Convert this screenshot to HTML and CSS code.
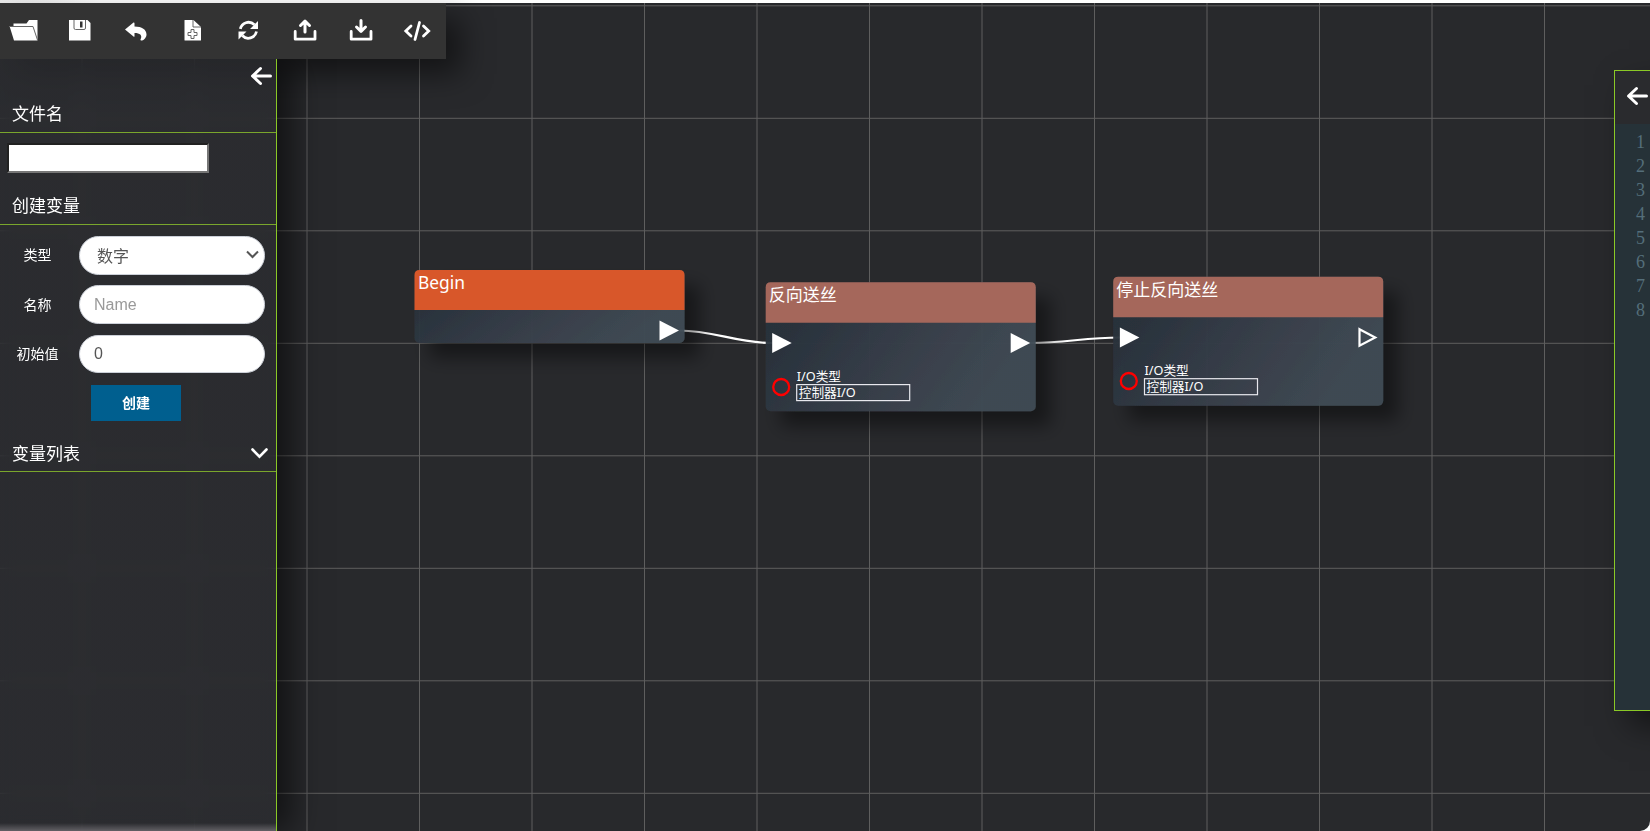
FILE: index.html
```html
<!DOCTYPE html>
<html lang="zh-CN">
<head>
<meta charset="utf-8">
<title>Flow editor</title>
<link rel="stylesheet" href="styles.css">
</head>
<body>
<main class="editor">
  <svg class="board" viewBox="0 0 1650 831">
    <defs>
      <linearGradient id="body" x1="0" y1="0" x2="1" y2=".35">
        <stop offset="0" stop-color="#28313b"/><stop offset=".2" stop-color="#2a333d"/><stop offset=".72" stop-color="#3b424e"/><stop offset="1" stop-color="#3f4b54"/>
      </linearGradient>
      <filter id="shadow" x="-20%" y="-40%" width="150%" height="210%">
        <feDropShadow dx="15" dy="15" stdDeviation="9" flood-color="#000" flood-opacity=".45"/>
      </filter>
      <path id="pin" d="M0 0 19.5 10 0 20z"/>
    </defs>
    <path class="grid" d="M82 0V831M194.500 0V831M307 0V831M419.500 0V831M532 0V831M644.500 0V831M757 0V831M869.500 0V831M982 0V831M1094.500 0V831M1207 0V831M1319.500 0V831M1432 0V831M1544.500 0V831M0 5.800H1650M0 118.300H1650M0 230.800H1650M0 343.300H1650M0 455.800H1650M0 568.300H1650M0 680.800H1650M0 793.300H1650"/>
    <path class="wire" d="M679 330.500C714 330.500 736 343 772 343M1030 343C1066 343 1084 337.500 1120 337.500"/>
    <g transform="translate(414.500 270)">
      <rect class="node-body" width="270" height="73" rx="5"/>
      <path class="node-begin" d="M0 40V5Q0 0 5 0H265Q270 0 270 5V40z"/>
      <text class="node-title node-title-begin" x="3.500" y="19">Begin</text>
      <use class="pin-on" href="#pin" x="245" y="50.500"/>
    </g>
    <g transform="translate(765.700 282.300)">
      <rect class="node-body" width="270" height="129" rx="5"/>
      <path class="node-head" d="M0 40.500V5Q0 0 5 0H265Q270 0 270 5V40.500z"/>
      <text class="node-title" x="3" y="19">反向送丝</text>
      <use class="pin-on" href="#pin" x="6.500" y="50.700"/>
      <use class="pin-on" href="#pin" x="245" y="50.700"/>
      <circle class="port" cx="15.500" cy="104.700" r="8"/>
      <text class="node-label" x="31" y="98.500">I/O类型</text>
      <rect class="node-field" x="31" y="102.300" width="113" height="16"/>
      <text class="node-label" x="33" y="114.700">控制器I/O</text>
    </g>
    <g transform="translate(1113.200 276.700)">
      <rect class="node-body" width="270" height="129" rx="5"/>
      <path class="node-head" d="M0 40.500V5Q0 0 5 0H265Q270 0 270 5V40.500z"/>
      <text class="node-title" x="3" y="19">停止反向送丝</text>
      <use class="pin-on" href="#pin" x="6.700" y="50.700"/>
      <path class="pin-off" d="M246.300 52.500 262 60.800 246.300 69z"/>
      <circle class="port" cx="15.600" cy="104.300" r="8"/>
      <text class="node-label" x="31.300" y="98.500">I/O类型</text>
      <rect class="node-field" x="31.300" y="102" width="113" height="16"/>
      <text class="node-label" x="33.300" y="114.700">控制器I/O</text>
    </g>
  </svg>

  <nav class="toolbar">
    <svg class="tool" viewBox="0 0 30 24"><path class="fill" d="M4.500 5.500H17.500L20 2H28.500V22.500H5L.5 8H4.500z"/><path class="cut" d="M.5 8.500H24L28.500 22"/></svg>
    <svg class="tool" viewBox="0 0 30 24"><path class="fill" d="M4 2H22.500L25.500 5V22.500H4z"/><path class="cut" d="M9 2V10Q9 11.500 10.500 11.500H19Q20.500 11.500 20.500 10V2"/><path class="dark" d="M15 3.500H17.500V9.500H15z"/></svg>
    <svg class="tool" viewBox="0 0 30 24"><path class="fill" d="M4 11.500 12.500 4.500Q13.500 4 13.500 5.500V8.500C21 8.500 25.500 11.500 25.500 16.500C25.500 19 23.500 22 21 22.500C19.500 22.700 19.200 21.800 19.700 21C21.500 17.300 19 15 13.500 15V18Q13.500 19.300 12.500 18.600z"/></svg>
    <svg class="tool" viewBox="0 0 30 24"><path class="fill" d="M6.500 2.500Q6.500 2 7 2H15.500L23 9V22Q23 22.500 22.500 22.500H7Q6.500 22.500 6.500 22z"/><path class="cut" d="M15 2V9H23M13 11.500H16V14.500H19V17.500H16V20.500H13V17.500H10V14.500H13z"/></svg>
    <svg class="tool" viewBox="0 0 30 24"><path class="sync" d="M6.300 10.800C8 5 15 1.800 20.500 6.800M22.500 13.500C21 20 13 22.700 8.300 17.500"/><path class="fill" d="M24 3V11H16zM4.500 21.500V13.500H12.500z"/></svg>
    <svg class="tool" viewBox="0 0 30 24"><path class="line" d="M15 14V4M10.500 7.500 15 3.200 19.500 7.500"/><path class="tray" d="M5.200 13.500V21.200H25V13.500"/></svg>
    <svg class="tool" viewBox="0 0 30 24"><path class="line" d="M15 2.500V12.500M10.500 9 15 13.300 19.500 9"/><path class="tray" d="M5.200 13.500V21.200H25V13.500"/></svg>
    <svg class="tool" viewBox="0 0 30 24"><path class="code-icon" d="M9 8 3.800 13 9 18M21.500 8 26.700 13 21.500 18M17.500 4.500 13 21.500"/></svg>
  </nav>

  <aside class="sidebar">
    <div class="collapse"><svg width="22" height="20" viewBox="0 0 22 20"><path class="line" d="M20.500 10H3M10.500 2.500 2.500 10 10.500 17.500"/></svg></div>
    <h2 class="title">文件名</h2>
    <div class="file-row"><input class="file-input" type="text"></div>
    <h2 class="title title-create">创建变量</h2>
    <form class="form">
      <label class="row"><span class="label">类型</span><span class="control control-select">数字<svg width="13" height="9" viewBox="0 0 13 9"><path class="select-arrow" d="M1 1.500 6.500 7 12 1.500"/></svg></span></label>
      <label class="row"><span class="label">名称</span><input class="control" placeholder="Name"></label>
      <label class="row"><span class="label">初始值</span><input class="control" value="0"></label>
      <button class="create" type="button">创建</button>
    </form>
    <h2 class="title title-list">变量列表<svg class="list-toggle" width="17" height="11" viewBox="0 0 17 11"><path class="chevron" d="M1.500 1.500 8.500 8.700 15.500 1.500"/></svg></h2>
  </aside>

  <section class="code">
    <div class="code-head"><svg width="22" height="20" viewBox="0 0 22 20"><path class="line" d="M20.500 10H3M10.500 2.500 2.500 10 10.500 17.500"/></svg></div>
    <ol class="gutter"><li>1</li><li>2</li><li>3</li><li>4</li><li>5</li><li>6</li><li>7</li><li>8</li></ol>
  </section>
</main>
</body>
</html>
```
FILE: styles.css
```css
* { box-sizing: border-box; }
body {
  margin: 0;
  background: linear-gradient(90deg, #e8e8e8, #fff 100px);
  font-family: "Noto Sans", "Noto Sans CJK SC", sans-serif;
  color: #fff;
}
.editor {
  position: relative;
  height: 831px;
  overflow: hidden;
}
.board {
  display: block;
  width: 1650px;
  height: 831px;
  background: #28292c;
  clip-path: inset(3px 0 0 0 round 0 0 10px 0);
}
.grid { fill: none; stroke: #5e5e5e; stroke-width: 1; }
.wire { fill: none; stroke: #fff; stroke-width: 2.2; }
.node-body { fill: url(#body); fill-opacity: .95; filter: url(#shadow); }
.node-begin { fill: #d8572a; }
.node-head { fill: #a5675b; }
.node-title { font-size: 17px; fill: #fff; }
.node-title-begin { font-size: 17.4px; }
.node-label { font-size: 12.7px; fill: #fff; }
.node-field { fill: none; stroke: #e8e8ee; stroke-width: 1.2; }
.pin-on { fill: #fff; }
.pin-off { fill: none; stroke: #fff; stroke-width: 2.2; }
.port { fill: none; stroke: #f00; stroke-width: 2.3; }

/* Toolbar */
.toolbar {
  position: absolute;
  top: 3px;
  left: 0;
  display: flex;
  align-items: center;
  gap: 26.2px;
  width: 446px;
  height: 56px;
  padding: 0 0 3px 9px;
  background: #333;
  box-shadow: 15px 15px 30px rgba(0, 0, 0, .5);
}
.tool { flex: none; width: 30px; height: 24px; }
.fill { fill: #fff; }
.dark { fill: #333; }
.cut { fill: none; stroke: #666; stroke-width: 1; }
.line { fill: none; stroke: #fff; stroke-width: 3; stroke-linecap: round; stroke-linejoin: round; }
.tray { fill: none; stroke: #fff; stroke-width: 2.8; stroke-linejoin: round; stroke-linecap: round; }
.sync { fill: none; stroke: #fff; stroke-width: 2.8; }
.code-icon { fill: none; stroke: #fff; stroke-width: 2.8; stroke-linecap: round; }

/* Sidebar */
.sidebar {
  position: absolute;
  top: 59px;
  left: 0;
  width: 277px;
  height: 772px;
  padding-top: 7px;
  border-right: 1px solid #8ac926;
  background: linear-gradient(rgba(44, 45, 49, .72) 764px, #626065 772px);
  backdrop-filter: blur(8px);
  box-shadow: 15px 0 30px rgba(0, 0, 0, .55);
  clip-path: inset(0 -60px 0 0);
}
.collapse { display: flex; justify-content: flex-end; height: 20px; padding-right: 4px; }
.title {
  display: flex;
  justify-content: space-between;
  align-items: center;
  height: 47px;
  margin: 0;
  padding: 6px 8px 0 12px;
  border-bottom: 1px solid #7aa62c;
  font-size: 17px;
  font-weight: 400;
}
.file-row { height: 49px; padding: 10px 7px; }
.file-input {
  width: 202px;
  height: 30px;
  border: 2px inset #767676;
  background: #fff;
}
.title-create { height: 43px; padding-top: 3px; }
.form {
  display: flex;
  flex-direction: column;
  gap: 10.8px;
  padding: 11px 11px 0 0;
  height: 206px;
}
.row { display: flex; align-items: center; height: 38.6px; }
.label { width: 79px; padding: 0 4px 2px 0; text-align: center; font-size: 14px; flex: none; }
.control {
  width: 186px;
  height: 38.6px;
  padding: 0 14px;
  border: 1px solid #ccd0d8;
  border-radius: 20px;
  background: #fff;
  color: #555;
  font: 16px "Liberation Sans", "Noto Sans CJK SC", sans-serif;
}
.control::placeholder { color: #999; }
.control-select { display: flex; align-items: center; justify-content: space-between; padding: 0 5px 1px 17px; }
.select-arrow { fill: none; stroke: #555; stroke-width: 2; }
.list-toggle { margin-top: 2px; }
.chevron { fill: none; stroke: #fff; stroke-width: 2.6; stroke-linecap: round; }
.create {
  width: 90px;
  height: 36px;
  flex: none;
  margin: .6px 0 0 91px;
  padding: 0 0 2px;
  border: 0;
  background: #005f8f;
  color: #fff;
  font: 700 14px "Noto Sans CJK SC", sans-serif;
}
.title-list { height: 41px; padding-top: 2px; }

/* Code panel */
.code {
  position: absolute;
  top: 70px;
  left: 1614px;
  width: 400px;
  height: 641px;
  border: 1px solid #8ac926;
  background: #263238;
  box-shadow: 15px 15px 30px rgba(0, 0, 0, .5);
}
.code-head { height: 53px; padding: 15px 0 0 11px; background: #2a2b2e; }
.gutter {
  width: 30px;
  margin: 0;
  padding: 6px 0 0;
  list-style: none;
  text-align: right;
  color: #546e7a;
  font: 18px/24px "Liberation Serif", serif;
}
```
